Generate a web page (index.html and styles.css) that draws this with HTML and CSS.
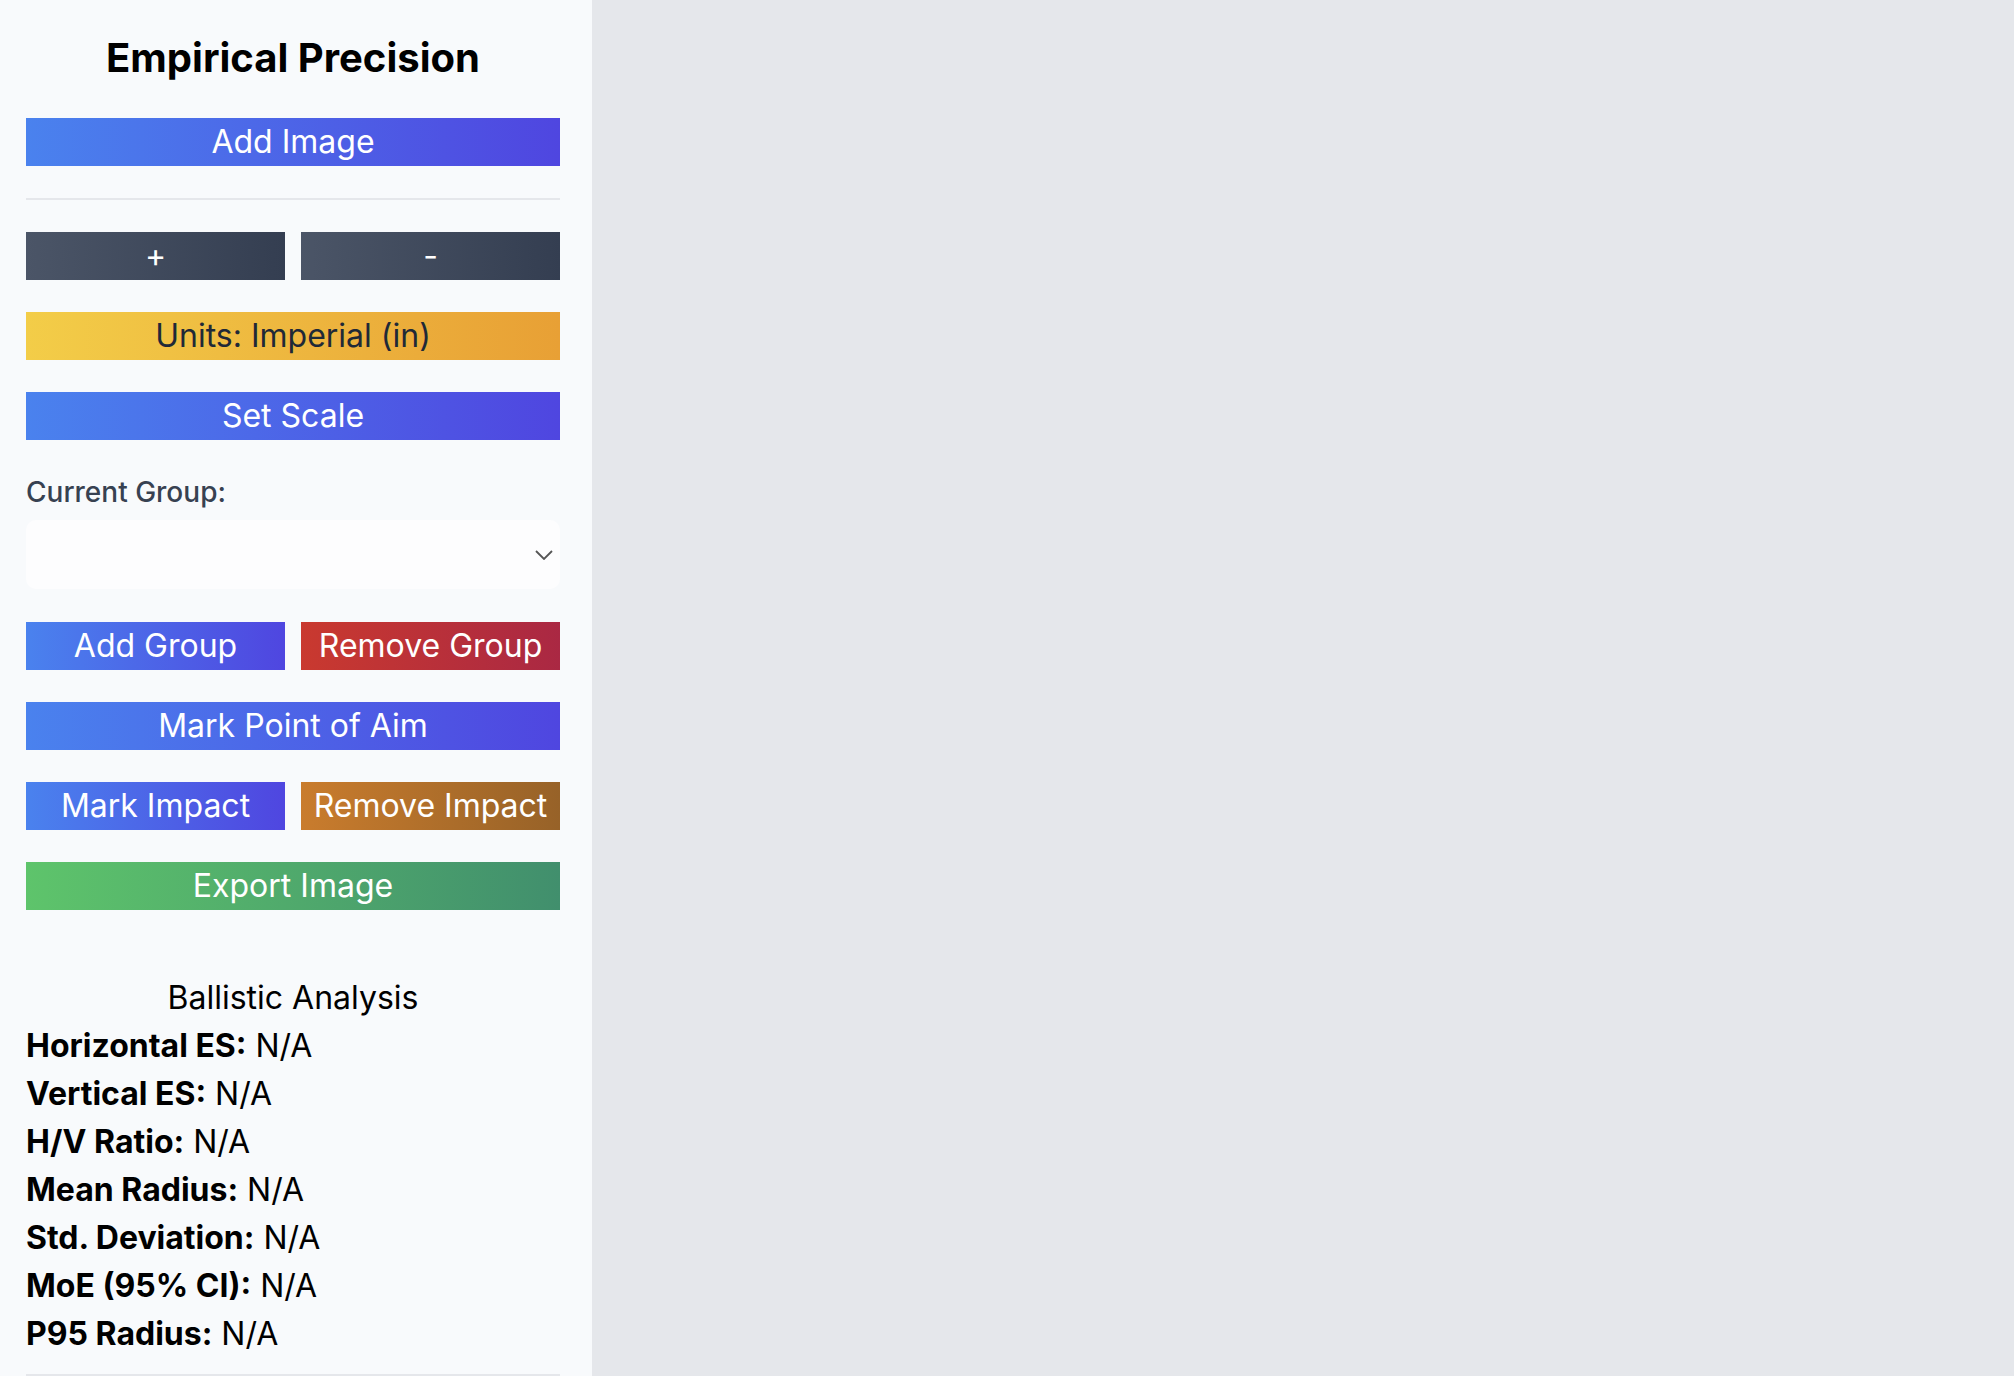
FILE: index.html
```html
<!DOCTYPE html>
<html lang="en">
<head>
<meta charset="utf-8">
<title>Empirical Precision</title>
<link rel="stylesheet" href="styles.css">
</head>
<body>
<div class="app">
  <aside class="sidebar">
    <h1 class="title">Empirical Precision</h1>
    <button class="btn btn-blue">Add Image</button>
    <hr class="rule">
    <div class="pair">
      <button class="btn btn-dark">+</button>
      <button class="btn btn-dark">-</button>
    </div>
    <button class="btn btn-yellow">Units: Imperial (in)</button>
    <button class="btn btn-blue">Set Scale</button>
    <label class="field-label">Current Group:</label>
    <div class="select">
      <svg class="chev" width="18" height="10" viewBox="0 0 18 10"><path d="M1 1 L9 9 L17 1" fill="none" stroke="#555" stroke-width="1.8"/></svg>
    </div>
    <div class="pair">
      <button class="btn btn-blue">Add Group</button>
      <button class="btn btn-red">Remove Group</button>
    </div>
    <button class="btn btn-blue">Mark Point of Aim</button>
    <div class="pair">
      <button class="btn btn-blue">Mark Impact</button>
      <button class="btn btn-orange">Remove Impact</button>
    </div>
    <button class="btn btn-green">Export Image</button>
    <div class="analysis">
      <div class="analysis-title">Ballistic Analysis</div>
      <div class="stat"><b>Horizontal ES:</b> N/A</div>
      <div class="stat"><b>Vertical ES:</b> N/A</div>
      <div class="stat"><b>H/V Ratio:</b> N/A</div>
      <div class="stat"><b>Mean Radius:</b> N/A</div>
      <div class="stat"><b>Std. Deviation:</b> N/A</div>
      <div class="stat"><b>MoE (95% CI):</b> N/A</div>
      <div class="stat"><b>P95 Radius:</b> N/A</div>
    </div>
    <hr class="rule rule-bottom">
  </aside>
  <main class="canvas"></main>
</div>
</body>
</html>
```
FILE: styles.css
```css
* { box-sizing: border-box; }
html, body { margin: 0; padding: 0; height: 100%; }
body {
  font-family: Inter, "Noto Sans", "Liberation Sans", sans-serif;
  font-size: 32px;
  line-height: 1.5;
  color: #000;
  overflow: hidden;
}
.app { display: flex; height: 100vh; }
.sidebar {
  width: 592px;
  flex: none;
  background: #f8fafc;
  padding: 28px 32px 0 26px;
  display: flex;
  flex-direction: column;
  overflow: hidden;
}
.sidebar > * { flex-shrink: 0; }
.canvas { flex: 1; background: #e5e7eb; }
.title {
  margin: 0 0 30px;
  font-size: 40px;
  line-height: 60px;
  font-weight: 700;
  text-align: center;
}
.btn {
  display: block;
  width: 100%;
  height: 48px;
  border: 0;
  padding: 0;
  margin: 0 0 32px;
  font-family: inherit;
  font-size: 32px;
  line-height: 48px;
  color: #fff;
  text-align: center;
  white-space: nowrap;
}
.btn-blue { background: linear-gradient(to right, #4a82ee, #4f46e0); }
.btn-dark { background: linear-gradient(to right, #4b5567, #343e51); }
.btn-yellow { background: linear-gradient(to right, #f3cd48, #e8a035); color: #1f2937; }
.btn-red { background: linear-gradient(to right, #c9392f, #aa2843); }
.btn-orange { background: linear-gradient(to right, #c97c2d, #976228); }
.btn-green { background: linear-gradient(to right, #5ec46b, #418f6d); }
.pair {
  display: grid;
  grid-template-columns: 1fr 1fr;
  column-gap: 16px;
}
.rule {
  border: 0;
  height: 2px;
  background: #e5e7eb;
  margin: 0 0 32px;
  width: 100%;
}
.field-label {
  display: block;
  font-size: 28px;
  font-weight: 500;
  line-height: 40px;
  color: #374151;
  margin-bottom: 8px;
}
.select {
  position: relative;
  height: 69px;
  background: #fdfdfe;
  border-radius: 10px;
  margin-bottom: 33px;
}
.chev {
  position: absolute;
  right: 7px;
  top: 30px;
}
.analysis { margin-top: 32px; }
.analysis-title { text-align: center; line-height: 48px; }
.stat { line-height: 48px; }
.stat b { font-weight: 700; }
.rule-bottom { margin-top: 16px; }
```
